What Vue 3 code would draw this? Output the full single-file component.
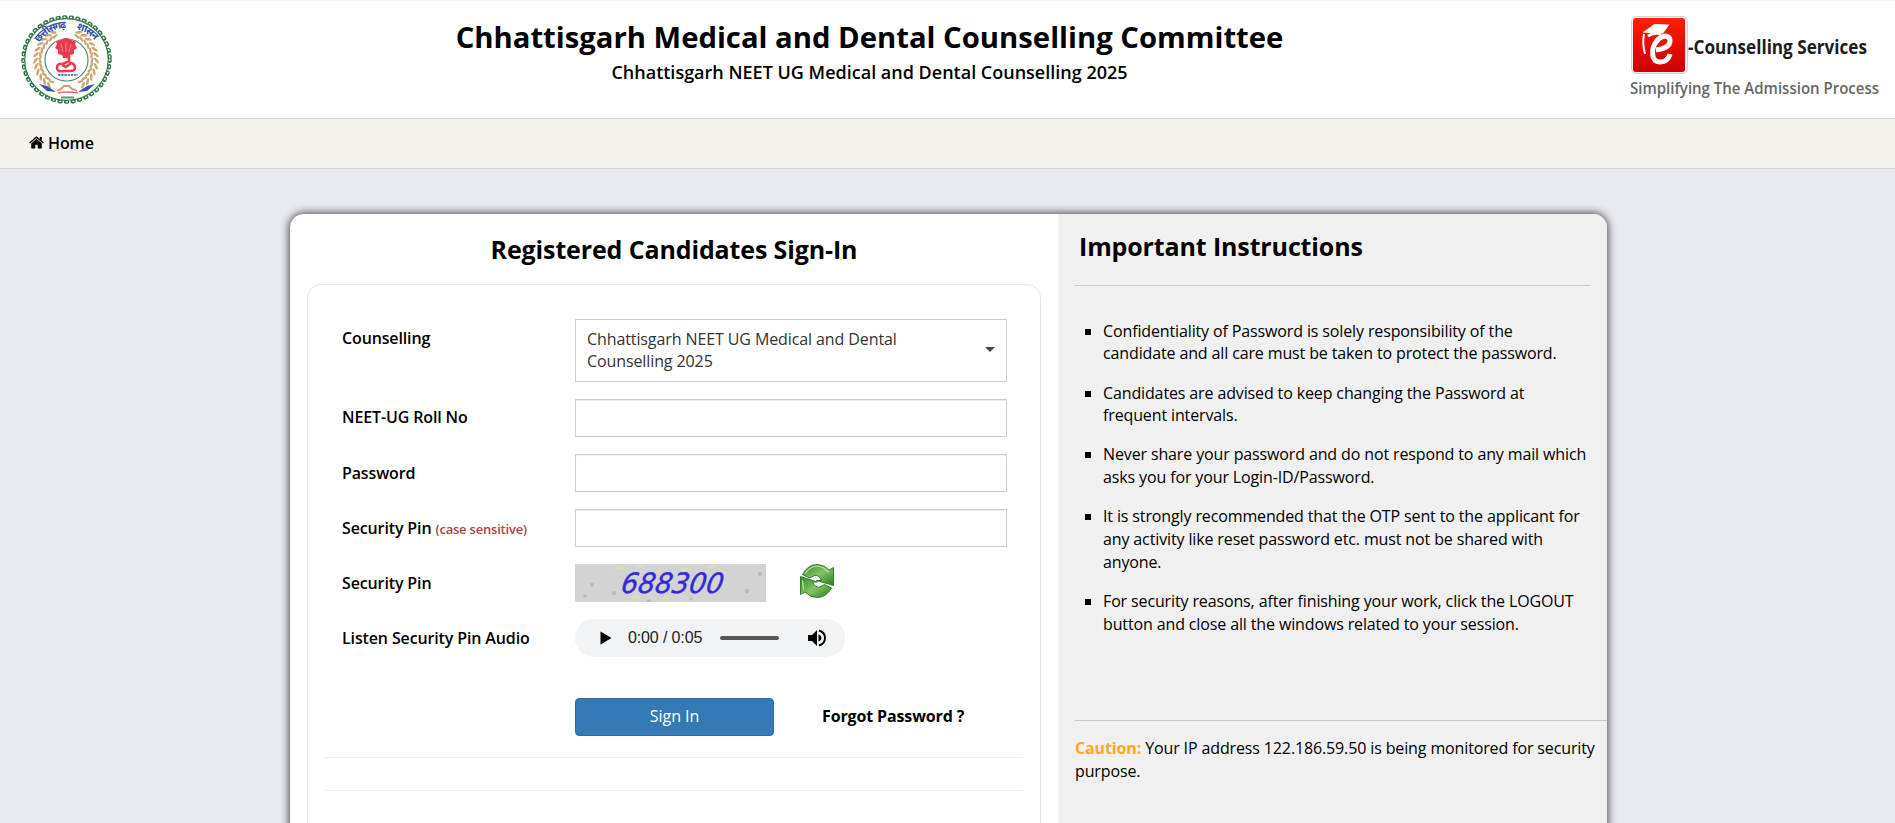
<script setup>
  import { ref } from "vue";

  const rollNo = ref("");
  const password = ref("");
  const securityPin = ref("");

  const instructions = [
    "Confidentiality of Password is solely responsibility of the candidate and all care must be taken to protect the password.",
    "Candidates are advised to keep changing the Password at frequent intervals.",
    "Never share your password and do not respond to any mail which asks you for your Login-ID/Password.",
    "It is strongly recommended that the OTP sent to the applicant for any activity like reset password etc. must not be shared with anyone.",
    "For security reasons, after finishing your work, click the LOGOUT button and close all the windows related to your session.",
  ];

  // leaves of the wreath, as angles around the centre of the emblem
  const leaves = [];
  for (let a = 25; a <= 155; a += 11) {
    leaves.push(a);
  }
</script>

<template>
  <div class="page">
    <header class="header">
      <svg class="emblem" width="94" height="92" viewBox="0 0 94 92">
        <ellipse cx="46.5" cy="44.5" rx="43.3" ry="42.3" fill="#fff" stroke="#2f7447" stroke-width="4" stroke-linecap="round" stroke-dasharray="1.5 5.13" />
        <ellipse cx="46.5" cy="44.5" rx="43.3" ry="42.3" fill="none" stroke="#fff" stroke-width="1.3" stroke-linecap="round" stroke-dasharray="1 5.63" />
        <ellipse cx="46.5" cy="44.5" rx="41.8" ry="40.8" fill="#fefefb" stroke="#3b7d52" stroke-width="1.2" />
        <g fill="#c9a673">
          <g v-for="a in leaves" :key="a">
            <ellipse cx="46" cy="14.5" rx="1.3" ry="3.6" :transform="`rotate(${a} 46 45) rotate(55 46 14.5)`" />
            <ellipse cx="46" cy="19" rx="1.2" ry="3.2" :transform="`rotate(${a} 46 45) rotate(110 46 19)`" />
            <ellipse cx="46" cy="14.5" rx="1.3" ry="3.6" :transform="`rotate(${-a} 46 45) rotate(-55 46 14.5)`" />
            <ellipse cx="46" cy="19" rx="1.2" ry="3.2" :transform="`rotate(${-a} 46 45) rotate(-110 46 19)`" />
          </g>
        </g>
        <ellipse cx="46.5" cy="45" rx="21.5" ry="21" fill="#fff" stroke="#4d9168" stroke-width="1.2" />
        <path d="M37 29q-2-2 1-3l3-1q2-2 5-2t5 2l3 1q3 1 1 3l2 4-3 2 0 4-4 1-1 2h-6l-1-2-4-1 0-4-3-2z" fill="#f0384c" />
        <path d="M43 42h6v4l-6 3q-6-1-6 3.500t6 3.500h7q5 0 5-3.500t-4-4.500l-5 4-4-2" fill="none" stroke="#f0384c" stroke-width="2.6" />
        <path d="M41 29l2 8M46 27v10M51 29l-2 8" fill="none" stroke="#ff9ba0" stroke-width=".8" />
        <path d="M38 60h20" stroke="#3f50b8" stroke-width="1.6" stroke-dasharray="2.5 .7" />
        <path d="M19 69l8 2 9 6-9-1zM75 69l-8 2-9 6 9-1z" fill="#3550b4" />
        <path d="M40 75l4-4h5l4 4M37 76l4-2M57 76l-4-2" fill="none" stroke="#c5a06f" stroke-width="1.8" />
        <path d="M38 78q9-2 20 0" fill="none" stroke="#ee6777" stroke-width="1.5" />
        <path d="M41 82.5h13" stroke="#5b9b6f" stroke-width="2" />
        <path id="emblem-left" d="M19 27.500a33 32 0 0 1 30-14.500" fill="none" />
        <path id="emblem-right" d="M55 14a33 32 0 0 1 23 17" fill="none" />
        <text class="emblem-text"><textPath href="#emblem-left" textLength="32">छत्तीसगढ़</textPath></text>
        <text class="emblem-text"><textPath href="#emblem-right" textLength="22">शासन</textPath></text>
      </svg>

      <div class="titles">
        <h1>Chhattisgarh Medical and Dental Counselling Committee</h1>
        <h2>Chhattisgarh NEET UG Medical and Dental Counselling 2025</h2>
      </div>

      <svg class="brand" width="255" height="92" viewBox="0 0 255 92">
        <defs>
          <linearGradient id="brand-red" x1="0" y1="0" x2="0" y2="1">
            <stop offset="0" stop-color="#ff1d00" />
            <stop offset="1" stop-color="#cc0000" />
          </linearGradient>
        </defs>
        <rect x="2.5" y="1.5" width="56" height="57" rx="5" fill="#f1f1f1" stroke="#d4d4d4" />
        <rect x="4" y="3" width="52" height="54" rx="3" fill="url(#brand-red)" />
        <path d="M13.5 17.5l12-8.500 15 .6-6.500 9-14-.7z" fill="#fff" />
        <path d="M15 19q-2 9 1 20" fill="none" stroke="#fff" stroke-width="2" />
        <path d="M19 21q7-4 13-2" fill="none" stroke="#fff" stroke-width="3" />
        <path d="M27 35q14-2 14-9 0-5-5-5-8 1-12 12-2 14 7 14 8 0 10-8" fill="none" stroke="#fff" stroke-width="5" />
        <text x="59" y="39" class="brand-name" textLength="179" lengthAdjust="spacingAndGlyphs">-Counselling Services</text>
        <text x="1" y="79" class="brand-tag" textLength="249" lengthAdjust="spacingAndGlyphs">Simplifying The Admission Process</text>
      </svg>
    </header>

    <nav class="navbar">
      <a class="home">
        <svg width="15" height="13" viewBox="0 0 15 13">
          <path d="M7.5 3.1L2.2 7.4v4.4q0 .6.6.6h3.500V8.8h2.400v3.600h3.500q.6 0 .6-.6V7.4z" />
          <path d="M.6 6.9L7.5 1.2l6.900 5.700" fill="none" stroke="#000" stroke-width="1.3" />
          <path d="M10.8 1h2v4l-2-1.700z" />
        </svg>
        Home
      </a>
    </nav>

    <main class="card">
      <section class="signin">
        <h3>Registered Candidates Sign-In</h3>
        <form class="panel" @submit.prevent>
          <div class="row">
            <label>Counselling</label>
            <div class="select">
              <span>Chhattisgarh NEET UG Medical and Dental Counselling 2025</span>
              <i class="caret"></i>
            </div>
          </div>
          <div class="row">
            <label class="roll-label" for="roll-no">NEET-UG Roll No</label>
            <input id="roll-no" v-model="rollNo" type="text">
          </div>
          <div class="row">
            <label for="password">Password</label>
            <input id="password" v-model="password" type="password">
          </div>
          <div class="row">
            <label for="pin">Security Pin <small>(case sensitive)</small></label>
            <input id="pin" v-model="securityPin" type="text">
          </div>
          <div class="row">
            <label>Security Pin</label>
            <div class="captcha-cell">
              <svg class="captcha" width="191" height="38" viewBox="0 0 191 38">
                <rect width="191" height="38" fill="#d3d3d3" />
                <path d="M40 4h8M62 2h7M80 8h10M106 5h9M132 3h8M56 33h9M88 34h6M146 18h5" stroke="#dcdcb8" stroke-width="3" />
                <g fill="#b9b9c2">
                  <circle cx="17" cy="21" r="2" />
                  <circle cx="10" cy="32" r="1.8" />
                  <circle cx="39" cy="29" r="2" />
                  <circle cx="74" cy="37" r="2" />
                  <circle cx="116" cy="35" r="1.6" />
                  <circle cx="172" cy="27" r="2.2" />
                  <circle cx="185" cy="10" r="2.2" />
                </g>
                <text x="0" y="0" transform="translate(45 29) skewX(-10)" textLength="102" lengthAdjust="spacingAndGlyphs">688300</text>
              </svg>
              <svg class="refresh" width="34" height="34" viewBox="0 0 34 34">
                <defs>
                  <linearGradient id="leaf" x1="0" y1="0" x2="1" y2="1">
                    <stop offset="0" stop-color="#2f8426" />
                    <stop offset=".5" stop-color="#84c463" />
                    <stop offset="1" stop-color="#257f1d" />
                  </linearGradient>
                </defs>
                <g fill="url(#leaf)" stroke="#2b7326" stroke-width=".9" stroke-linejoin="round">
                  <path d="M2.5 10.5Q8 .5 17 .5q7 0 12 5.500l4.500-2.500V21.500L16.500 16.500h5q-3-6-7-5l-5 2.500z" />
                  <path d="M31.5 24Q26 33.500 17 33.500q-7 0-12-5.500L.5 30.500V12.500L17.500 18h-5q3 6 7 5l5-2.500z" />
                </g>
                <path d="M5 9.5q5-7 12-7.500 6 0 12 6.500M2.500 16.500l1 9" fill="none" stroke="#c3e5b1" stroke-width="1.2" />
              </svg>
            </div>
          </div>
          <div class="row">
            <label>Listen Security Pin Audio</label>
            <div class="player">
              <svg class="play" width="12" height="14" viewBox="0 0 12 14"><path d="M.5.5v13L11.5 7z" /></svg>
              <span class="time">0:00 / 0:05</span>
              <span class="track"></span>
              <svg class="volume" width="18" height="18" viewBox="0 0 18 18">
                <path d="M0 6v6h4l5 5V1L4 6z" />
                <path d="M10.5 5.2q3 1.200 3 3.800t-3 3.800z" />
                <path d="M11 1.5q6 1.700 6 7.500t-6 7.500" fill="none" stroke="#000" stroke-width="1.9" />
              </svg>
            </div>
          </div>
          <div class="actions">
            <button type="submit">Sign In</button>
            <a class="forgot">Forgot Password ?</a>
          </div>
          <hr>
          <hr>
        </form>
      </section>

      <aside class="info">
        <h3>Important Instructions</h3>
        <ul>
          <li v-for="text in instructions" :key="text">{{ text }}</li>
        </ul>
        <p class="caution"><b>Caution:</b> Your IP address 122.186.59.50 is being monitored for security purpose.</p>
      </aside>
    </main>
  </div>
</template>

<style>
  body {
    margin: 0;
    overflow: hidden;
  }
</style>

<style scoped>
  .page {
    box-sizing: border-box;
    height: 823px;
    overflow: hidden;
    background: #e7eaef;
    color: #000;
    font-family: "Open Sans", "Noto Sans", sans-serif;
    font-size: 16px;
    line-height: 22.86px;
    letter-spacing: -0.13px;
  }
  .page * {
    box-sizing: border-box;
  }
  .header {
    display: flex;
    justify-content: space-between;
    height: 119px;
    padding: 14px 11px 0 20px;
    background: #fff;
    border-top: 1px solid #fdf0ee;
    border-bottom: 1px solid #d5d5d5;
    letter-spacing: 0;
  }
  .emblem-text {
    font-family: "Noto Sans", sans-serif;
    font-size: 10px;
    font-weight: 700;
    fill: #2c49ac;
  }
  .titles {
    margin-left: -4px;
    padding-top: 4px;
    text-align: center;
  }
  h1 {
    margin: 0;
    font-size: 29.25px;
    font-weight: 700;
    line-height: 36px;
  }
  h2 {
    margin: 4px 0 0;
    font-size: 18px;
    font-weight: 600;
    line-height: 26px;
  }
  .brand {
    overflow: visible;
  }
  .brand-name {
    font-size: 19px;
    font-weight: 700;
    fill: #1c1c1c;
  }
  .brand-tag {
    font-size: 16px;
    font-weight: 600;
    fill: #666;
  }
  .navbar {
    display: flex;
    align-items: center;
    height: 50px;
    padding-left: 29px;
    background: #f5f2ed;
    border-bottom: 1px solid #d3d5d5;
  }
  .home {
    display: flex;
    align-items: center;
    gap: 4px;
    margin-top: -1px;
    font-weight: 600;
  }
  .card {
    display: flex;
    width: 1317px;
    height: 720px;
    margin: 45px 0 0 290px;
    overflow: hidden;
    background: #fff;
    border-radius: 14px;
    box-shadow: 0 0 8px 1px #444;
  }
  .signin {
    width: 768px;
    padding: 0 17px;
  }
  .signin h3 {
    margin: 0;
    padding-top: 19px;
    height: 70px;
    font-size: 25px;
    font-weight: 700;
    line-height: 32px;
    text-align: center;
  }
  .panel {
    height: 640px;
    padding: 34px 17px 0;
    border: 1px solid #e5e5e5;
    border-radius: 14px;
  }
  .row {
    display: flex;
    margin-bottom: 17px;
    padding: 0 16px 0 17px;
  }
  .row label {
    width: 233px;
    padding-top: 8px;
    font-weight: 600;
  }
  .row .roll-label {
    padding-top: 7px;
  }
  small {
    color: #a94442;
    font-size: 13px;
    letter-spacing: -0.2px;
  }
  .select {
    display: flex;
    align-items: center;
    justify-content: space-between;
    width: 432px;
    height: 63px;
    padding: 0 11px 1px;
    border: 1px solid #ccc;
    color: #333;
    line-height: 22px;
    letter-spacing: -0.1px;
  }
  .select span {
    width: 330px;
  }
  .caret {
    margin-bottom: 2px;
    border-top: 5px solid #444;
    border-left: 5px solid transparent;
    border-right: 5px solid transparent;
  }
  input {
    width: 432px;
    height: 38px;
    padding: 6px 12px;
    border: 1px solid #ccc;
    box-shadow: inset 0 1px 1px rgba(0, 0, 0, 0.075);
    font: inherit;
  }
  .captcha-cell {
    display: flex;
    gap: 34px;
  }
  .captcha text {
    font-family: "DejaVu Sans", sans-serif;
    font-size: 28px;
    font-style: italic;
    letter-spacing: 0;
    fill: #3328dc;
    stroke: #3328dc;
    stroke-width: 0.4px;
  }
  .player {
    display: flex;
    align-items: center;
    width: 270px;
    height: 38px;
    padding: 0 19px 0 25px;
    background: #f1f3f4;
    border-radius: 19px;
  }
  .play {
    margin-right: 16px;
  }
  .time {
    width: 92px;
    color: #222;
    font-family: "Liberation Sans", Arial, sans-serif;
    font-size: 16px;
  }
  .track {
    width: 59px;
    height: 4px;
    border-radius: 2px;
    background: #5a5657;
  }
  .volume {
    margin-left: auto;
  }
  .actions {
    display: flex;
    align-items: center;
    margin: 41px 0 21px 250px;
  }
  button {
    width: 199px;
    height: 38px;
    margin: 0;
    padding: 0 0 2px;
    background: #337ab7;
    border: 1px solid #2e6da4;
    border-radius: 4px;
    color: #fff;
    font: inherit;
  }
  .forgot {
    margin: -2px 0 0 48px;
    font-weight: 700;
  }
  .panel hr {
    margin: 0 0 32px;
    border: 0;
    border-top: 1px solid #eee;
  }
  .info {
    display: flex;
    flex-direction: column;
    width: 549px;
    padding-left: 17px;
    background: #f0f0f0;
  }
  .info h3 {
    width: 515px;
    height: 72px;
    margin: 0;
    padding: 16px 0 0 4px;
    border-bottom: 1px solid #c9c9c9;
    font-size: 25px;
    font-weight: 700;
    line-height: 32px;
  }
  ul {
    height: 434px;
    margin: 0;
    padding: 33.6px 19px 0 28px;
    list-style: square;
  }
  li {
    margin-bottom: 16.2px;
  }
  .caution {
    margin: 0;
    padding: 16px 0 0;
    border-top: 1px solid #c9c9c9;
  }
  .caution b {
    color: #ffa91f;
    font-weight: 700;
  }
</style>
